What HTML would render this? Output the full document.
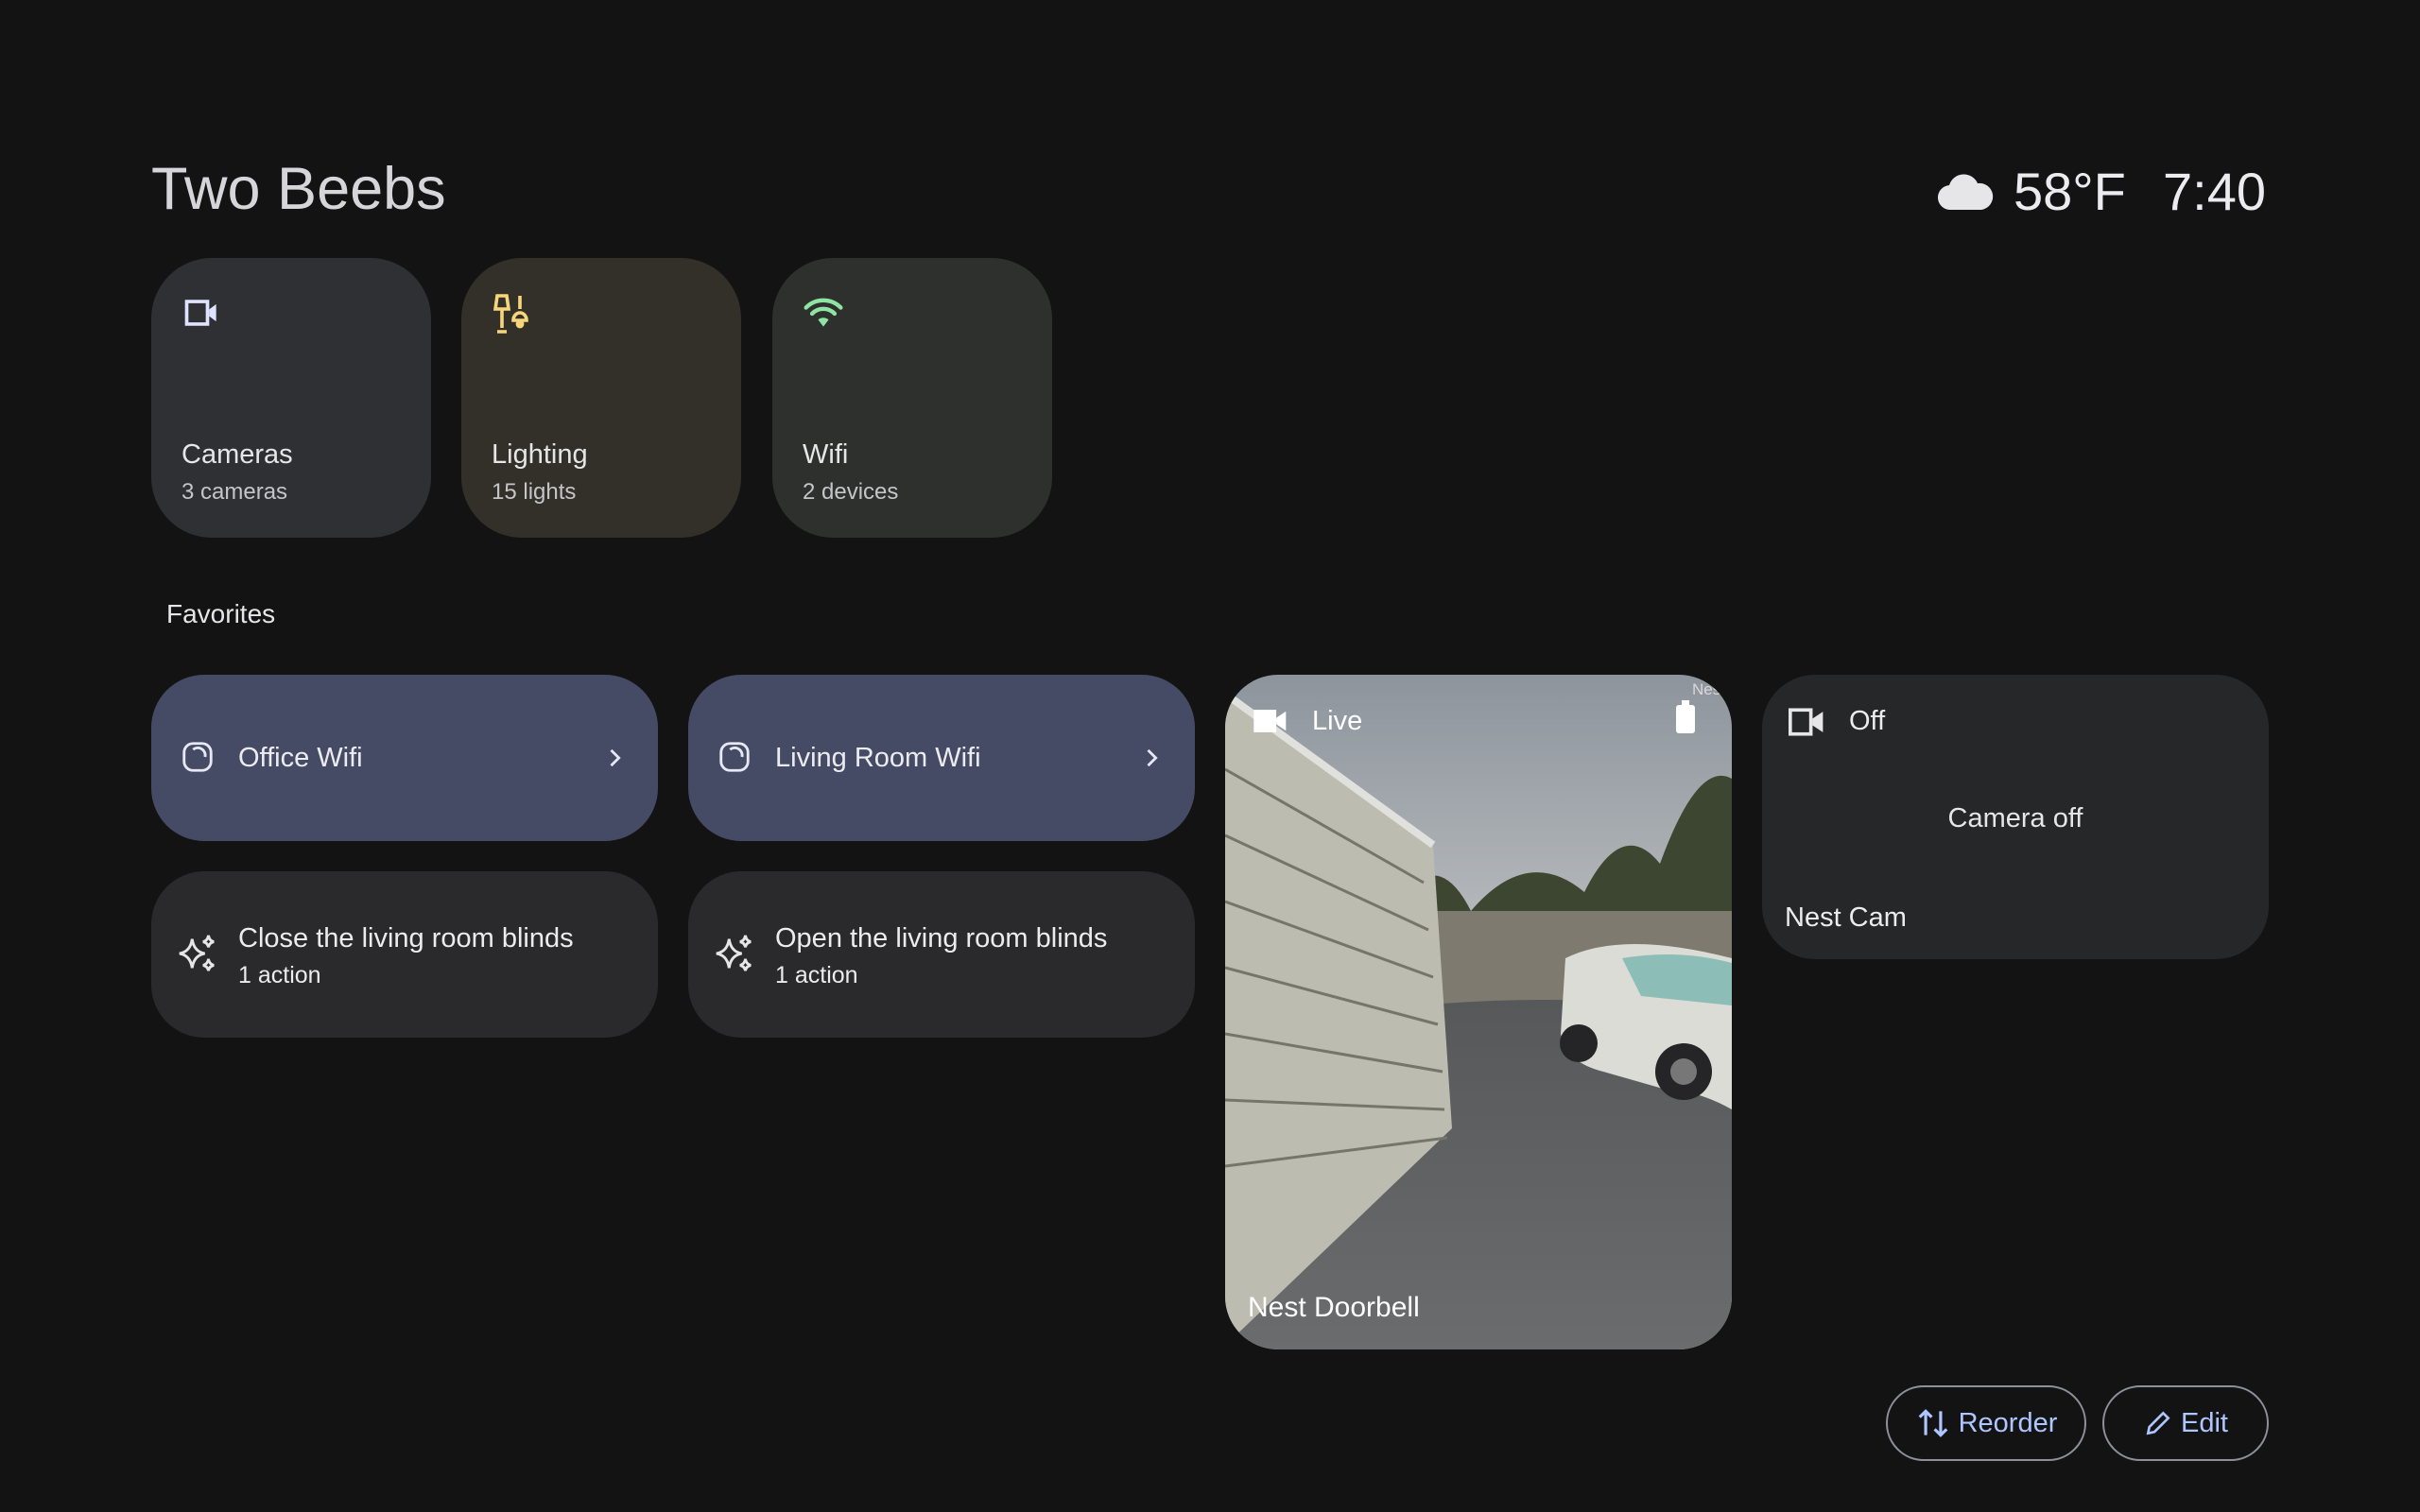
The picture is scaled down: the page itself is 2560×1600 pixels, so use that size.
<!DOCTYPE html>
<html><head><meta charset="utf-8"><style>
*{margin:0;padding:0;box-sizing:border-box}
body{width:2560px;height:1600px;background:#131313;font-family:"Liberation Sans",sans-serif;color:#e3e3e6;position:relative;overflow:hidden}
.a{position:absolute}
.tile{position:absolute;top:273px;width:296px;height:296px;border-radius:64px}
.tile .t{position:absolute;left:32px;top:192px;font-size:29px;color:#e6e6e8}
.tile .s{position:absolute;left:32px;top:234px;font-size:24px;color:#c4c5c9}
.tile svg{position:absolute;left:32px;top:36px}
.fav{position:absolute;width:536px;height:176px;border-radius:56px}
.fav .t{position:absolute;left:92px;font-size:29px;color:#ececf0}
.btn{position:absolute;top:1466px;height:80px;border:2px solid #8e9099;border-radius:40px;color:#aec6ff;font-size:29px;display:flex;align-items:center;justify-content:center;gap:8px}
</style></head><body>
<div class="a" style="left:160px;top:164px;font-size:63px;color:#d6d6da">Two Beebs</div>
<svg class="a" style="left:2050px;top:180px" width="60" height="44" viewBox="0 0 60 44"><path d="M14 42 A13 13 0 0 1 12 16 A16 16 0 0 1 42 14 A14 14 0 0 1 46 42 Z" fill="#e6e6e8"/></svg>
<div class="a" style="left:2130px;top:170px;font-size:56px;color:#ececf0">58°F</div>
<div class="a" style="left:2288px;top:170px;font-size:56px;color:#ececf0">7:40</div>

<div class="tile" style="left:160px;background:#2f3033"><svg width="44" height="44" viewBox="0 0 24 24"><path d="M3 5.5h12v13H3z" fill="none" stroke="#dfe3ff" stroke-width="2"/><path d="M16 10l4-3v10l-4-3z" fill="#dfe3ff"/></svg><div class="t">Cameras</div><div class="s">3 cameras</div></div>
<div class="tile" style="left:488px;background:#33302a"><svg width="48" height="48" viewBox="0 0 24 24" fill="none" stroke="#f7d67a" stroke-width="1.8"><path d="M3 2h5l1 7H2z"/><path d="M5.5 9v10M3 21h5M15 2v7M11.5 15a3.5 4 0 0 1 7 0z"/><circle cx="15" cy="17" r="1.3" fill="#f7d67a"/></svg><div class="t">Lighting</div><div class="s">15 lights</div></div>
<div class="tile" style="left:817px;background:#2e302e"><svg width="44" height="44" viewBox="0 0 24 24" fill="none" stroke="#8fe3a3" stroke-width="2.4" stroke-linecap="round"><path d="M2 9a14 14 0 0 1 20 0M5.5 12.5a9 9 0 0 1 13 0"/><path d="M9 16a4.5 4.5 0 0 1 6 0L12 20z" fill="#8fe3a3" stroke="none"/></svg><div class="t">Wifi</div><div class="s">2 devices</div></div>

<div class="a" style="left:176px;top:634px;font-size:28px;color:#e6e6e8">Favorites</div>

<div class="fav" style="left:160px;top:714px;background:#464b65"><svg class="a" style="left:30px;top:68px" width="38" height="38" viewBox="0 0 24 24" fill="none" stroke="#e6e8f5" stroke-width="1.8"><rect x="3" y="3" width="18" height="18" rx="6"/><path d="M9 7a5 5 0 0 1 8 5"/></svg><div class="t" style="top:72px">Office Wifi</div><svg class="a" style="left:476px;top:74px" width="28" height="28" viewBox="0 0 24 24" fill="none" stroke="#e6e8f5" stroke-width="2.4"><path d="M9 5l7 7-7 7"/></svg></div>
<div class="fav" style="left:728px;top:714px;background:#464b65"><svg class="a" style="left:30px;top:68px" width="38" height="38" viewBox="0 0 24 24" fill="none" stroke="#e6e8f5" stroke-width="1.8"><rect x="3" y="3" width="18" height="18" rx="6"/><path d="M9 7a5 5 0 0 1 8 5"/></svg><div class="t" style="top:72px">Living Room Wifi</div><svg class="a" style="left:476px;top:74px" width="28" height="28" viewBox="0 0 24 24" fill="none" stroke="#e6e8f5" stroke-width="2.4"><path d="M9 5l7 7-7 7"/></svg></div>
<div class="fav" style="left:160px;top:922px;background:#2a2a2c"><svg class="a" style="left:26px;top:64px" width="46" height="46" viewBox="0 0 24 24" fill="none" stroke="#e6e6e8" stroke-width="1.5"><path d="M9 4q1 7 7 8q-6 1-7 8q-1-7-7-8q6-1 7-8z"/><path d="M18 2q.5 3 3 3.5q-2.5.5-3 3q-.5-2.5-3-3q2.5-.5 3-3.5zM18 15q.5 3 3 3.5q-2.5.5-3 3q-.5-2.5-3-3q2.5-.5 3-3.5z"/></svg><div class="t" style="top:55px">Close the living room blinds</div><div class="t" style="top:96px;font-size:25px">1 action</div></div>
<div class="fav" style="left:728px;top:922px;background:#2a2a2c"><svg class="a" style="left:26px;top:64px" width="46" height="46" viewBox="0 0 24 24" fill="none" stroke="#e6e6e8" stroke-width="1.5"><path d="M9 4q1 7 7 8q-6 1-7 8q-1-7-7-8q6-1 7-8z"/><path d="M18 2q.5 3 3 3.5q-2.5.5-3 3q-.5-2.5-3-3q2.5-.5 3-3.5zM18 15q.5 3 3 3.5q-2.5.5-3 3q-.5-2.5-3-3q2.5-.5 3-3.5z"/></svg><div class="t" style="top:55px">Open the living room blinds</div><div class="t" style="top:96px;font-size:25px">1 action</div></div>

<div class="a" style="left:1296px;top:714px;width:536px;height:714px;border-radius:56px;overflow:hidden">
<svg width="536" height="714" viewBox="0 0 536 714">
<defs><linearGradient id="sky" x1="0" y1="0" x2="0" y2="1"><stop offset="0" stop-color="#8d949c"/><stop offset=".5" stop-color="#c3c6c7"/><stop offset="1" stop-color="#d9c9a8"/></linearGradient>
<linearGradient id="rd" x1="0" y1="0" x2="0" y2="1"><stop offset="0" stop-color="#56585a"/><stop offset="1" stop-color="#6b6c6d"/></linearGradient></defs>
<rect width="536" height="714" fill="url(#sky)"/>
<path d="M170 260 Q220 170 260 250 Q320 180 380 230 Q420 150 460 200 Q500 90 536 110 V360 H170Z" fill="#3d4631"/>
<rect x="200" y="250" width="336" height="120" fill="#7f7a70"/>
<path d="M0 380 Q300 320 536 360 V714 H0Z" fill="url(#rd)"/>
<path d="M0 20 L220 180 L240 480 L0 710Z" fill="#bdbcb1"/>
<path d="M0 20 L220 180" stroke="#e0e0dc" stroke-width="8"/>
<g stroke="#75756c" stroke-width="3"><path d="M0 100L210 220M0 170L215 270M0 240L220 320M0 310L225 370M0 380L230 420M0 450L232 460M0 520L235 490"/></g>
<path d="M360 300 Q420 270 536 300 V460 Q500 440 470 440 L400 420 Q360 410 355 380Z" fill="#dcdcd6"/>
<path d="M420 300 Q480 290 536 305 V350 L440 340Z" fill="#8cbdb6"/>
<circle cx="374" cy="390" r="20" fill="#252527"/><circle cx="485" cy="420" r="30" fill="#252527"/><circle cx="485" cy="420" r="14" fill="#777"/>
</svg>
<svg class="a" style="left:28px;top:32px" width="42" height="34" viewBox="0 0 24 20"><rect x="1" y="3" width="14" height="14" fill="#fff"/><path d="M15 8l6-4v12l-6-4z" fill="#fff"/></svg>
<div class="a" style="left:92px;top:33px;font-size:29px;color:#fff">Live</div>
<div class="a" style="left:477px;top:32px;width:20px;height:30px;border:3px solid #fff;border-radius:3px;background:#fff"></div>
<div class="a" style="left:483px;top:27px;width:8px;height:6px;background:#fff"></div>
<div class="a" style="left:494px;top:6px;font-size:17px;color:#d8d8d8">Nest</div>
<div class="a" style="left:24px;top:653px;font-size:30px;color:#fff">Nest Doorbell</div>
</div>

<div class="a" style="left:1864px;top:714px;width:536px;height:301px;border-radius:56px;background:#262729">
<svg class="a" style="left:26px;top:30px" width="44" height="40" viewBox="0 0 24 22"><rect x="2" y="4" width="12" height="14" fill="none" stroke="#e6e6e8" stroke-width="2"/><path d="M15 9l6-4v12l-6-4z" fill="#e6e6e8"/></svg>
<div class="a" style="left:92px;top:33px;font-size:29px;color:#ececf0">Off</div>
<div class="a" style="left:0;width:536px;text-align:center;top:136px;font-size:29px;color:#e6e6e8">Camera off</div>
<div class="a" style="left:24px;top:241px;font-size:29px;color:#ececf0">Nest Cam</div>
</div>

<div class="btn" style="left:1995px;width:212px"><svg width="38" height="38" viewBox="0 0 24 24" fill="none" stroke="#aec6ff" stroke-width="2"><path d="M7 20V4M3 8l4-4 4 4M17 4v16M13 16l4 4 4-4"/></svg>Reorder</div>
<div class="btn" style="left:2224px;width:176px"><svg width="32" height="32" viewBox="0 0 24 24" fill="none" stroke="#aec6ff" stroke-width="2"><path d="M4 20l1-5L16 4l4 4L9 19z"/></svg>Edit</div>
</body></html>
